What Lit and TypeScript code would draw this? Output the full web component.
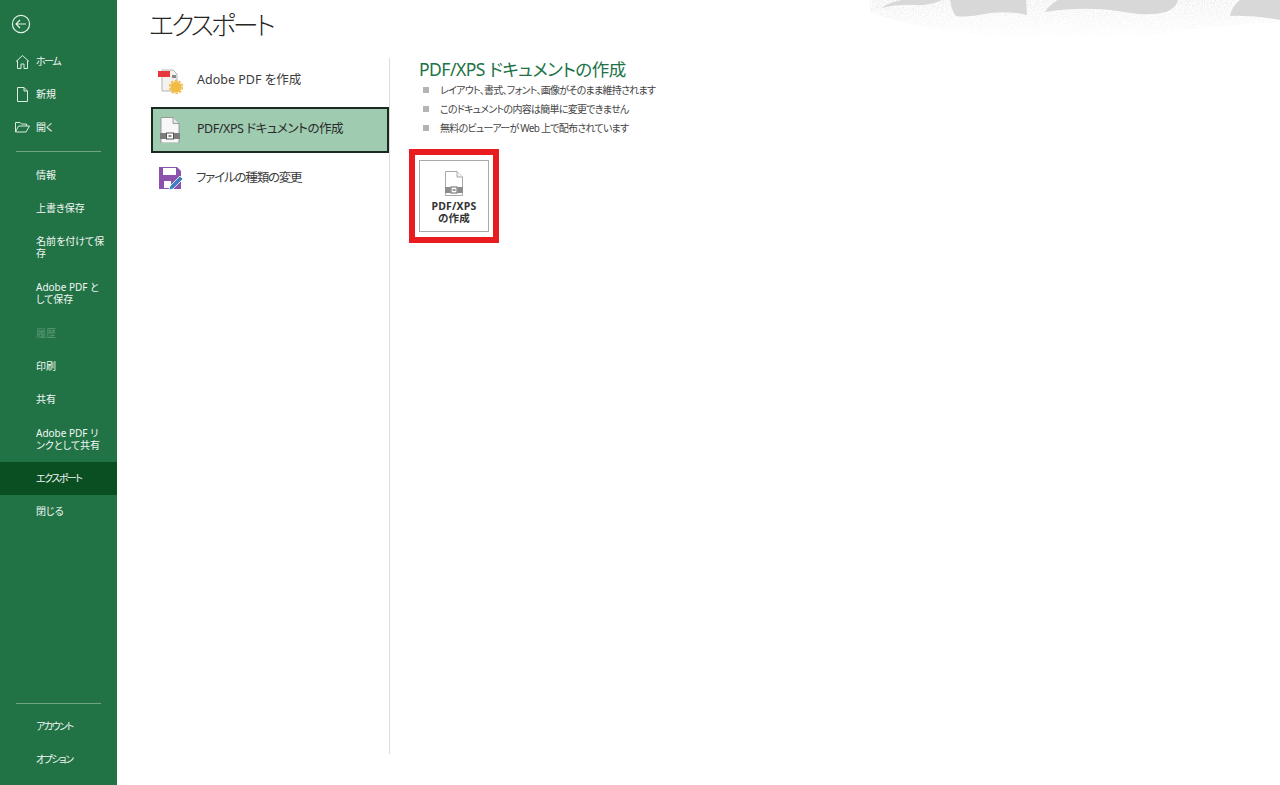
import { LitElement, html, css, svg } from "lit";
import { customElement } from "lit/decorators.js";

const homeIcon = svg`<path d="M2 8.5 L8.5 2.5 L15 8.5 M3.5 7.5 V15.5 H7 V11 H10 V15.5 H13.5 V7.5" fill="none" stroke="currentColor" stroke-width="1"/>`;
const newIcon = svg`<path d="M3.5 1.5 H10 L13.5 5 V15.5 H3.5 Z M10 1.5 V5 H13.5" fill="none" stroke="currentColor" stroke-width="1"/>`;
const openIcon = svg`<path d="M1.5 13 V3.5 H6 L7.5 5 H12.5 V7 M1.5 13 H12 L15.5 7 H4.5 L1.5 13" fill="none" stroke="currentColor" stroke-width="1"/>`;

const docExport = svg`
  <path d="M1.5 .5 H13 L18.5 6 V24.5 H1.5 Z" fill="#fff" stroke="#a8a8a8"/>
  <path d="M13 .5 V6 H18.5" fill="#f4f4f4" stroke="#a8a8a8"/>
  <rect x="1" y="16" width="5.5" height="6" fill="#8c8c8c"/>
  <rect x="13.5" y="16" width="5.5" height="6" fill="#8c8c8c"/>
  <rect x="7" y="16" width="6" height="6" fill="#fff" stroke="#666"/>
  <rect x="8.5" y="18" width="3" height="2" fill="#9a9a9a"/>`;

@customElement("app-root")
export class AppRoot extends LitElement {
  static styles = css`
    :host {
      display: flex;
      height: 100vh;
      min-height: 785px;
      position: relative;
      overflow: hidden;
      background: #fff;
      font-family: "Noto Sans", "Noto Sans CJK JP", sans-serif;
      font-feature-settings: "palt";
      color: #333;
    }
    .side {
      width: 117px;
      flex: none;
      background: #217346;
      color: #f2f7f4;
      display: flex;
      flex-direction: column;
      font-size: 10px;
    }
    .back {
      height: 45px;
      display: flex;
      align-items: flex-start;
      padding: 14px 0 0 11px;
      box-sizing: border-box;
      color: #e6f1ea;
    }
    .item {
      min-height: 33px;
      display: flex;
      align-items: center;
      padding: 0 10px 0 36px;
      box-sizing: border-box;
      line-height: 12.5px;
      position: relative;
    }
    .item.tall { min-height: 46px; }
    .item.tall.up { padding-bottom: 2px; }
    .item.off { color: #5d9a78; }
    .item.sel { background: #0a4f22; }
    .item.tight { letter-spacing: -1.5px; }
    .item svg {
      position: absolute;
      left: 14px;
      top: 8px;
      width: 17px;
      height: 17px;
      color: #dcebe2;
    }
    .rule {
      height: 1px;
      background: #6fa487;
      margin: 7px 16px 6px 16px;
    }
    .rule.mainrule { margin-bottom: 7px; }
    .spacer { flex: 1; }
    .rule.bottom { margin: 0 16px 6px 16px; }
    .tail { height: 9px; }
    .main { flex: 1; display: flex; flex-direction: column; min-width: 0; }
    h1 {
      margin: 0;
      padding: 7px 0 0 32px;
      height: 58px;
      box-sizing: border-box;
      font-size: 26px;
      line-height: 37px;
      letter-spacing: -3px;
      font-weight: 300;
      color: #262626;
    }
    .cols { display: flex; height: 696px; }
    .mid {
      width: 273px;
      box-sizing: border-box;
      padding: 0 0 0 34px;
      border-right: 1px solid #dcdcdc;
      display: flex;
      flex-direction: column;
      font-size: 12.5px;
      color: #3c3c3c;
    }
    .opt {
      height: 46px;
      box-sizing: border-box;
      display: flex;
      align-items: center;
      gap: 14px;
      padding-left: 4px;
      margin-bottom: 2px;
      border: 2px solid transparent;
    }
    .opt:first-child { margin-bottom: 3px; }
    .opt.sel {
      background: #9fcbb0;
      border-color: #1b2a20;
      color: #2a2a2a;
    }
    .opt span { padding-bottom: 5px; }
    .opt span.kana { letter-spacing: -0.45px; }
    .opt span.kana2 { letter-spacing: -1.2px; margin-left: -1px; padding-bottom: 3px; }
    .opt svg { width: 26px; height: 26px; flex: none; }
    .panel { padding: 0 0 0 29px; }
    h2 {
      margin: 0;
      font-size: 17.5px;
      line-height: 22px;
      letter-spacing: -0.5px;
      font-weight: 400;
      color: #217346;
    }
    ul {
      list-style: none;
      margin: 0;
      padding: 0 0 0 4px;
      font-size: 10px;
      letter-spacing: -0.73px;
      color: #444;
    }
    li {
      height: 19px;
      display: flex;
      align-items: center;
      gap: 11px;
    }
    li::before {
      content: "";
      width: 6px;
      height: 6px;
      background: #b4b4b4;
      flex: none;
    }
    .mark {
      display: inline-block;
      margin: 12px 0 0 -10px;
      border: 6px solid #e81c1f;
      padding: 5px 4px;
    }
    .btn {
      width: 70px;
      height: 72px;
      box-sizing: border-box;
      border: 1px solid #a9a9a9;
      background: #fff;
      display: flex;
      flex-direction: column;
      align-items: center;
      padding: 10px 0 0;
      font-size: 10.5px;
      font-weight: 700;
      line-height: 12px;
      letter-spacing: 0.2px;
      color: #333;
      text-align: center;
    }
    .btn svg { width: 20px; height: 25px; margin-bottom: 4px; }
    .bg {
      position: absolute;
      top: 0;
      right: 0;
      width: 420px;
      height: 40px;
      pointer-events: none;
    }
  `;

  render() {
    return html`
      <svg class="bg" viewBox="0 0 420 40">
        <defs>
          <filter id="n" x="0" y="0" width="100%" height="100%">
            <feTurbulence type="fractalNoise" baseFrequency="0.9" numOctaves="2" seed="4"/>
            <feColorMatrix values="0 0 0 0 .84  0 0 0 0 .84  0 0 0 0 .84  0 0 0 3 -1.1"/>
            <feComposite in2="SourceGraphic" operator="in"/>
          </filter>
          <linearGradient id="f" x1="0" y1="0" x2="0" y2="1">
            <stop offset="0" stop-color="#000" stop-opacity="1"/>
            <stop offset="1" stop-color="#000" stop-opacity=".15"/>
          </linearGradient>
        </defs>
        <path d="M10 0 H420 V22 Q340 26 300 35 H120 Q60 30 10 12 Z" fill="url(#f)" filter="url(#n)"/>
        <g fill="#d8d8d8">
          <path d="M21 8 Q30 2 42 0 H82 Q70 6 55 5 Q38 4 21 8 Z"/>
          <path d="M90 0 H166 L167 15 Q150 11 130 13 Q105 18 96 16 Q92 12 90 0 Z"/>
          <path d="M185 12 Q190 4 198 0 H318 Q316 8 306 12 Q290 16 270 13 Q230 5 185 12 Z"/>
          <path d="M370 16 Q372 6 380 0 H420 V20 Q395 15 370 16 Z"/>
        </g>
      </svg>
      <nav class="side">
        <div class="back">
          <svg width="20" height="20" viewBox="0 0 20 20" fill="none" stroke="currentColor" stroke-width="1.2">
            <circle cx="10" cy="10" r="8.6"/>
            <path d="M15 10 H5 M9 6 L5 10 L9 14"/>
          </svg>
        </div>
        <div class="item tight"><svg viewBox="0 0 17 17">${homeIcon}</svg>ホーム</div>
        <div class="item"><svg viewBox="0 0 17 17">${newIcon}</svg>新規</div>
        <div class="item"><svg viewBox="0 0 17 17">${openIcon}</svg>開く</div>
        <div class="rule mainrule"></div>
        <div class="item">情報</div>
        <div class="item">上書き保存</div>
        <div class="item tall up">名前を付けて保存</div>
        <div class="item tall up">Adobe PDF として保存</div>
        <div class="item off">履歴</div>
        <div class="item">印刷</div>
        <div class="item">共有</div>
        <div class="item tall">Adobe PDF リンクとして共有</div>
        <div class="item sel tight">エクスポート</div>
        <div class="item">閉じる</div>
        <div class="spacer"></div>
        <div class="rule bottom"></div>
        <div class="item tight">アカウント</div>
        <div class="item tight">オプション</div>
        <div class="tail"></div>
      </nav>
      <main class="main">
        <h1>エクスポート</h1>
        <div class="cols">
          <div class="mid">
            <div class="opt">
              <svg viewBox="0 0 26 26">
                <path d="M5 2 H16 L20 6 V23 H5 Z" fill="#f4f2ef" stroke="#b5b5b5"/>
                <rect x="1" y="3" width="12" height="6" fill="#e8373c"/>
                <rect x="15" y="7" width="4" height="3" fill="#8a8a8a"/>
                <circle cx="19" cy="19" r="5.5" fill="#f0bc45"/>
                <circle cx="19" cy="19" r="6.4" fill="none" stroke="#f0bc45" stroke-width="1.6" stroke-dasharray="2.5 1.5"/>
              </svg>
              <span>Adobe PDF を作成</span>
            </div>
            <div class="opt sel">
              <svg viewBox="0 0 26 26">
                <path d="M4 .5 H16 L22 6.5 V26 H4 Z" fill="#f7f7f7" stroke="#8a8a8a" stroke-width=".8"/>
                <path d="M16 .5 V6.5 H22" fill="#e4e4e4" stroke="#8a8a8a" stroke-width=".8"/>
                <rect x="3" y="16" width="6.5" height="6" fill="#7c7c7c"/>
                <rect x="16.5" y="16" width="6.5" height="6" fill="#7c7c7c"/>
                <rect x="9.5" y="16" width="7" height="6" fill="#fff" stroke="#555"/>
                <rect x="11.5" y="18" width="3" height="2" fill="#8a8a8a"/>
              </svg>
              <span class="kana">PDF/XPS ドキュメントの作成</span>
            </div>
            <div class="opt">
              <svg viewBox="0 0 26 26">
                <path d="M2 2 H20 L24 6 V24 H2 Z" fill="#8b53ac"/>
                <rect x="6" y="3" width="13" height="7" fill="#fff"/>
                <rect x="7" y="16" width="7" height="7" fill="#fff"/>
                <path d="M12 25 L13 21 L23 11 L26 14 L16 24 Z" fill="#3f7fc4" stroke="#fff" stroke-width=".8"/>
              </svg>
              <span class="kana2">ファイルの種類の変更</span>
            </div>
          </div>
          <section class="panel">
            <h2>PDF/XPS ドキュメントの作成</h2>
            <ul>
              <li>レイアウト、書式、フォント、画像がそのまま維持されます</li>
              <li>このドキュメントの内容は簡単に変更できません</li>
              <li>無料のビューアーが Web 上で配布されています</li>
            </ul>
            <div class="mark">
              <div class="btn">
                <svg viewBox="0 0 20 25">${docExport}</svg>
                <span>PDF/XPS<br />の作成</span>
              </div>
            </div>
          </section>
        </div>
      </main>
    `;
  }
}
